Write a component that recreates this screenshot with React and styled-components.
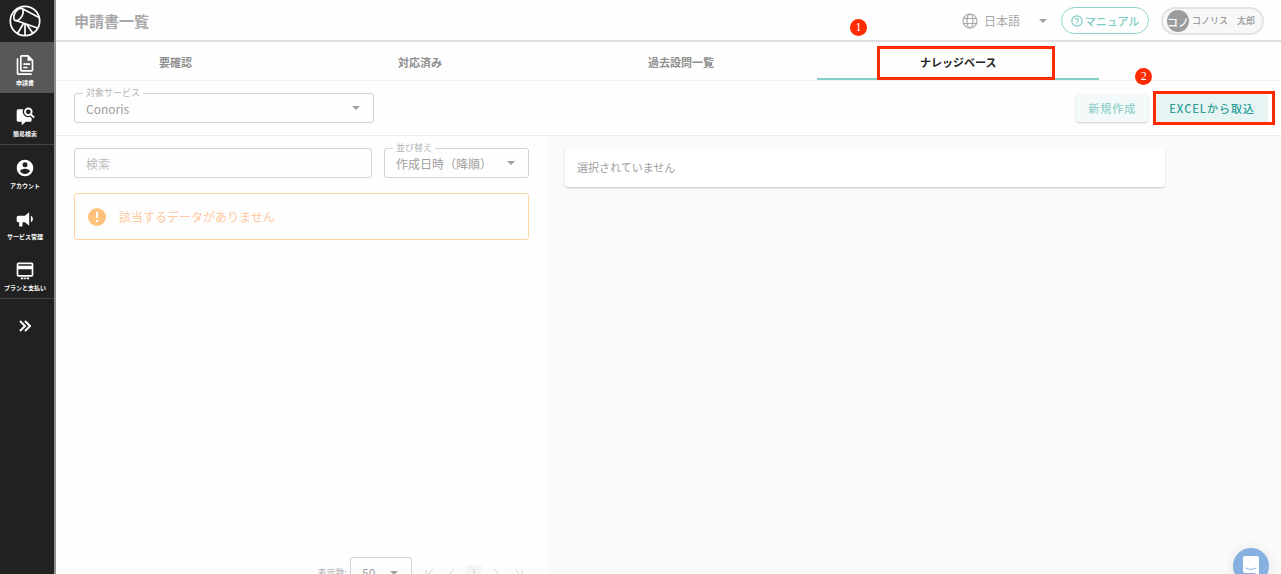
import styled, { createGlobalStyle } from "styled-components";

const GlobalStyle = createGlobalStyle`
  * {
    box-sizing: border-box;
  }
  body {
    margin: 0;
    background-color: #fefefe;
    color: #a0a0a0;
  }
  body, button, input, select {
    font-family: "Noto Sans CJK JP", "Noto Sans", sans-serif;
  }
`;

const menus = [
  { label: "申請書", icon: "files", active: true },
  { label: "簡易検索", icon: "search", divider: true },
  { label: "アカウント", icon: "account" },
  { label: "サービス管理", icon: "bullhorn" },
  { label: "プランと支払い", icon: "card", divider: true },
];

const tabs = ["要確認", "対応済み", "過去設問一覧"];

const paths = {
  files:
    "M16 0H8C6.9 0 6 .9 6 2V18C6 19.1 6.9 20 8 20H20C21.1 20 22 19.1 22 18V6L16 0M20 18H8V2H15V7H20V18M4 4V22H20V24H4C2.9 24 2 23.1 2 22V4H4M10 10V12H18V10H10M10 14V16H15V14H10Z",
  account:
    "M12,19.2C9.5,19.2 7.29,17.92 6,16C6.03,14 10,12.9 12,12.9C14,12.9 17.97,14 18,16C16.71,17.92 14.5,19.2 12,19.2M12,5A3,3 0 0,1 15,8A3,3 0 0,1 12,11A3,3 0 0,1 9,8A3,3 0 0,1 12,5M12,2A10,10 0 0,0 2,12A10,10 0 0,0 12,22A10,10 0 0,0 22,12C22,6.47 17.5,2 12,2Z",
  bullhorn:
    "M12,8H4A2,2 0 0,0 2,10V14A2,2 0 0,0 4,16H5V20A1,1 0 0,0 6,21H8A1,1 0 0,0 9,20V16H12L17,20V4L12,8M21.5,12C21.5,13.71 20.54,15.26 19,16V8C20.53,8.75 21.5,10.3 21.5,12Z",
  card: "M4 3H20A2 2 0 0 1 22 5V18A2 2 0 0 1 20 20H4A2 2 0 0 1 2 18V5A2 2 0 0 1 4 3M4 5V7H20V5H4M4 11V18H20V11H4M7 21H10V23H7V21M11 21H13V23H11V21M14 21H17V23H14V21Z",
};

function MenuIcon({ name }) {
  if (name === "search") {
    return (
      <svg width="20" height="20" viewBox="0 0 24 24" fill="currentColor">
        <path d="M4 4H10A6.500 6.500 0 0 0 18 13L20 15V17A2 2 0 0 1 18 19H13L8 23V19H4A2 2 0 0 1 2 17V6A2 2 0 0 1 4 4Z" />
        <circle cx="16" cy="7" r="4" fill="none" stroke="currentColor" strokeWidth="2.200" />
        <path d="M19 10L23 14" stroke="currentColor" strokeWidth="2.400" />
      </svg>
    );
  }
  return (
    <svg width="20" height="20" viewBox="0 0 24 24" fill="currentColor">
      <path d={paths[name]} />
    </svg>
  );
}

function Logo() {
  return (
    <svg width="32" height="32" viewBox="0 0 32 32" fill="none" stroke="#fff" strokeWidth="1.7">
      <circle cx="16" cy="16" r="14.7" />
      <ellipse cx="9.5" cy="9.5" rx="3.8" ry="6.8" transform="rotate(30 9.5 9.5)" />
      <path d="M13 3.500L30 12.500M7 15.500L28.500 23M16 19V30M14.500 18.500L8.500 28.500M17.500 19L24 28.500" />
    </svg>
  );
}

function Globe() {
  return (
    <svg width="16" height="16" viewBox="0 0 16 16" fill="none" stroke="#a8a8a8" strokeWidth="1.2">
      <circle cx="8" cy="8" r="7" />
      <ellipse cx="8" cy="8" rx="3" ry="7" />
      <path d="M1.5 5.5H14.5M1.5 10.5H14.5" />
    </svg>
  );
}

function Caret() {
  return (
    <CaretIcon width="8" height="4" viewBox="0 0 8 4" fill="#a0a0a0">
      <path d="M0 0H8L4 4Z" />
    </CaretIcon>
  );
}

function SelectField({ id, label, value, className }) {
  return (
    <Field className={className}>
      <FieldLabel htmlFor={id}>{label}</FieldLabel>
      <Select id={id} defaultValue={value}>
        <option>{value}</option>
      </Select>
      <Caret />
    </Field>
  );
}

function PageIcon({ d }) {
  return (
    <svg width="10" height="10" viewBox="0 0 10 10" fill="none" stroke="currentColor">
      <path d={d} />
    </svg>
  );
}

function App() {
  return (
    <Layout>
      <GlobalStyle />
      <Sidebar>
        <LogoLink href="#" aria-label="Conoris">
          <Logo />
        </LogoLink>
        {menus.map((menu) => (
          <MenuLink key={menu.label} href="#" $active={menu.active} $divider={menu.divider}>
            <MenuIcon name={menu.icon} />
            {menu.label}
          </MenuLink>
        ))}
        <ExpandButton type="button" aria-label="メニューを開く">
          <svg width="12" height="12" viewBox="0 0 12 12" fill="none" stroke="#fff" strokeWidth="2">
            <path d="M1 1L6 6L1 11M6 1L11 6L6 11" />
          </svg>
        </ExpandButton>
      </Sidebar>
      <Main>
        <Header>
          <Title>申請書一覧</Title>
          <Language>
            <Globe />
            <LanguageSelect aria-label="言語" defaultValue="日本語">
              <option>日本語</option>
            </LanguageSelect>
            <Caret />
          </Language>
          <ManualLink href="#">
            <svg width="12" height="12" viewBox="0 0 12 12" fill="none" stroke="currentColor" strokeWidth="1.2">
              <circle cx="6" cy="6" r="5.200" />
              <path d="M4.500 5A1.500 1.500 0 1 1 6 6.500V7.300M6 8.200V9.300" />
            </svg>
            マニュアル
          </ManualLink>
          <UserButton type="button">
            <Avatar>コノ</Avatar>
            コノリス　太郎
          </UserButton>
        </Header>
        <Tabs role="tablist">
          {tabs.map((tab) => (
            <Tab key={tab} type="button" role="tab" aria-selected="false">
              {tab}
            </Tab>
          ))}
          <Tab type="button" role="tab" aria-selected="true" $active>
            ナレッジベース
            <TabMarker />
            <TabBadge>1</TabBadge>
          </Tab>
        </Tabs>
        <Toolbar>
          <ServiceField id="service" label="対象サービス" value="Conoris" />
          <Actions>
            <ActionButton type="button" disabled>
              新規作成
            </ActionButton>
            <ActionButton type="button">
              EXCELから取込
              <ButtonMarker />
              <ButtonBadge>2</ButtonBadge>
            </ActionButton>
          </Actions>
        </Toolbar>
        <Content>
          <ListPane>
            <Filters>
              <SearchInput type="search" placeholder="検索" aria-label="検索" />
              <SortField id="sort" label="並び替え" value="作成日時（降順）" />
            </Filters>
            <Alert role="status">
              <svg width="18" height="18" viewBox="0 0 18 18">
                <circle cx="9" cy="9" r="9" fill="#ffc27d" />
                <path d="M8 4H10V10H8ZM8 12H10V14H8Z" fill="#fff" />
              </svg>
              該当するデータがありません
            </Alert>
            <Pager>
              <label htmlFor="size">表示数:</label>
              <SizeField>
                <Select id="size" defaultValue="50">
                  <option>50</option>
                </Select>
                <Caret />
              </SizeField>
              <Pages>
                <PageButton type="button" aria-label="最初" disabled>
                  <PageIcon d="M1 1V9M8 1L4 5L8 9" />
                </PageButton>
                <PageButton type="button" aria-label="前へ" disabled>
                  <PageIcon d="M7 1L3 5L7 9" />
                </PageButton>
                <PageButton type="button" $current>
                  1
                </PageButton>
                <PageButton type="button" aria-label="次へ" disabled>
                  <PageIcon d="M3 1L7 5L3 9" />
                </PageButton>
                <PageButton type="button" aria-label="最後" disabled>
                  <PageIcon d="M2 1L6 5L2 9M9 1V9" />
                </PageButton>
              </Pages>
            </Pager>
          </ListPane>
          <DetailPane>
            <Card>選択されていません</Card>
          </DetailPane>
        </Content>
      </Main>
      <ChatButton type="button" aria-label="チャット">
        <svg width="16" height="20" viewBox="0 0 16 20" fill="none">
          <path d="M2 0H14Q16 0 16 2V20L12 17H2Q0 17 0 15V2Q0 0 2 0Z" fill="#fff" />
          <path d="M3 12Q8 15 13 12" stroke="#86b0e0" strokeLinecap="round" />
        </svg>
      </ChatButton>
    </Layout>
  );
}

const Layout = styled.div`
  display: flex;
  height: 100vh;
  overflow: hidden;
`;

const Sidebar = styled.nav`
  display: flex;
  flex-direction: column;
  flex: none;
  width: 56px;
  border-right: 2px solid #8f8f8f;
  background-color: #212121;
`;
const LogoLink = styled.a`
  display: flex;
  align-items: center;
  justify-content: center;
  height: 42px;
  padding-right: 4px;
`;
const MenuLink = styled.a`
  display: flex;
  flex-direction: column;
  align-items: center;
  gap: 3px;
  height: ${(props) => (props.$divider ? 52 : 51)}px;
  padding: 13px 4px 0 0;
  border-bottom: ${(props) => (props.$divider ? "1px solid #424242" : "none")};
  background-color: ${(props) => (props.$active ? "#585858" : "transparent")};
  color: #fff;
  font-size: 6px;
  font-weight: 700;
  line-height: 10px;
  text-decoration: none;
  white-space: nowrap;
`;
const ExpandButton = styled.button`
  display: flex;
  align-items: center;
  justify-content: center;
  height: 54px;
  padding: 0 4px 0 0;
  border: 0;
  background: none;
`;

const Main = styled.main`
  display: flex;
  flex: 1;
  flex-direction: column;
  min-width: 0;
`;
const Header = styled.header`
  display: flex;
  align-items: center;
  flex: none;
  height: 42px;
  padding: 1px 17px 0 18px;
  border-bottom: 2px solid #dedede;
`;
const Title = styled.h1`
  margin: 0 auto 0 0;
  color: #a8a8a8;
  font-size: 15px;
  font-weight: 700;
  line-height: 22px;
`;
const CaretIcon = styled.svg`
  position: absolute;
  top: calc(50% - 2px);
  right: 14px;
  pointer-events: none;
`;
const Language = styled.div`
  position: relative;
  display: flex;
  align-items: center;
  gap: 6px;
  width: 99px;
`;
const LanguageSelect = styled.select`
  flex: 1;
  padding: 0;
  border: 0;
  appearance: none;
  background: none;
  color: #a8a8a8;
  font-size: 12px;
`;
const ManualLink = styled.a`
  display: flex;
  align-items: center;
  justify-content: center;
  gap: 2px;
  width: 88px;
  height: 27px;
  border: 1px solid #8fd3ce;
  border-radius: 14px;
  color: #7ccdc7;
  font-size: 11px;
  font-weight: 500;
  text-decoration: none;
`;
const UserButton = styled.button`
  display: flex;
  align-items: center;
  gap: 3px;
  height: 28px;
  margin-left: 12px;
  padding: 0 7px 0 4px;
  border: 2px solid #e4e4e4;
  border-radius: 14px;
  background-color: #f8f8f8;
  color: #9a9a9a;
  font-size: 9px;
  font-weight: 500;
  white-space: nowrap;
`;
const Avatar = styled.span`
  width: 22px;
  height: 22px;
  border-radius: 50%;
  background-color: #9c9c9c;
  color: #fff;
  font-size: 11px;
  line-height: 24px;
  overflow: hidden;
`;

const Tabs = styled.div`
  display: flex;
  flex: none;
  height: 39px;
  border-bottom: 1px solid #f2f2f2;
`;
const Tab = styled.button`
  position: relative;
  padding: 4px 103px 0;
  border: 0;
  border-bottom: 2px solid ${(props) => (props.$active ? "#86cfca" : "transparent")};
  background: none;
  color: ${(props) => (props.$active ? "#222" : "#8f8f8f")};
  font-size: 11px;
  font-weight: 700;
  white-space: nowrap;
`;
const Marker = styled.span`
  position: absolute;
  border: 3px solid #ff2a00;
  pointer-events: none;
`;
const TabMarker = styled(Marker)`
  inset: 4px 44px -2px 60px;
`;
const Badge = styled.span`
  position: absolute;
  width: 17px;
  height: 17px;
  border-radius: 50%;
  background-color: #ff2a00;
  color: #fff;
  font-family: "Liberation Serif", serif;
  font-size: 12px;
  font-weight: 400;
  letter-spacing: 0;
  line-height: 17px;
  text-align: center;
`;
const TabBadge = styled(Badge)`
  top: -23px;
  left: 33px;
`;

const Toolbar = styled.div`
  display: flex;
  align-items: center;
  justify-content: space-between;
  flex: none;
  height: 55px;
  padding: 0 14px 0 18px;
  border-bottom: 1px solid #ececec;
`;
const Field = styled.div`
  position: relative;
  height: 30px;
`;
const ServiceField = styled(SelectField)`
  width: 300px;
`;
const SortField = styled(SelectField)`
  width: 145px;
`;
const FieldLabel = styled.label`
  position: absolute;
  top: -6px;
  left: 9px;
  padding: 0 3px;
  background-color: #fefefe;
  color: #b4b4b4;
  font-size: 9px;
  line-height: 12px;
`;
const Select = styled.select`
  width: 100%;
  height: 100%;
  padding: 0 11px;
  border: 1px solid #d2d2d2;
  border-radius: 3px;
  appearance: none;
  background: none;
  color: #a0a0a0;
  font-size: 12px;
`;
const Actions = styled.div`
  display: flex;
  gap: 9px;
`;
const ActionButton = styled.button`
  position: relative;
  height: 28px;
  padding: 0 12px;
  border: 0;
  border-radius: 3px;
  background-color: #e6f5f4;
  box-shadow: 0 1px 2px rgba(0, 0, 0, 0.2);
  color: #2a9d95;
  font-size: 11px;
  font-weight: 500;
  letter-spacing: 1px;
  white-space: nowrap;

  &:disabled {
    background-color: #f4fafa;
    color: #94d0cc;
  }
`;
const ButtonMarker = styled(Marker)`
  inset: -3px -8px -3px -4px;
`;
const ButtonBadge = styled(Badge)`
  top: -26px;
  left: -22px;
`;

const Content = styled.div`
  display: flex;
  flex: 1;
  min-height: 0;
`;
const ListPane = styled.section`
  display: flex;
  flex-direction: column;
  flex: none;
  width: calc(40% + 1px);
  height: calc(100% + 14px);
  padding: 12px 18px 0;
`;
const Filters = styled.div`
  display: flex;
  gap: 12px;
`;
const SearchInput = styled.input`
  flex: 1;
  min-width: 0;
  height: 30px;
  padding: 0 11px;
  border: 1px solid #d2d2d2;
  border-radius: 3px;
  background: none;
  font-size: 12px;

  &::placeholder {
    color: #bdbdbd;
  }
`;
const Alert = styled.div`
  display: flex;
  align-items: center;
  gap: 13px;
  height: 47px;
  margin-top: 15px;
  padding: 0 13px;
  border: 1px solid #ffd6a3;
  border-radius: 3px;
  color: #ffc9a0;
  font-size: 12px;
`;
const Pager = styled.div`
  display: flex;
  align-items: center;
  justify-content: flex-end;
  margin-top: auto;
  padding-right: 3px;
  color: #b0b0b0;
  font-size: 9px;
`;
const SizeField = styled.div`
  position: relative;
  width: 62px;
  height: 31px;
  margin-left: 3px;
`;
const Pages = styled.div`
  display: flex;
  gap: 6px;
  margin-left: 10px;
`;
const PageButton = styled.button`
  display: flex;
  align-items: center;
  justify-content: center;
  width: 16px;
  height: 16px;
  padding: 0;
  border: 0;
  border-radius: 3px;
  background-color: ${(props) => (props.$current ? "#f5f5f5" : "transparent")};
  color: #d2d2d2;
  font-size: 9px;
`;

const DetailPane = styled.section`
  flex: 1;
  padding: 12px 18px;
  background-color: #fafafa;
`;
const Card = styled.div`
  max-width: 600px;
  padding: 10px 12px;
  border-radius: 3px;
  background-color: #fff;
  box-shadow: 0 1px 2px rgba(0, 0, 0, 0.2);
  font-size: 11px;
  line-height: 19px;
`;

const ChatButton = styled.button`
  position: fixed;
  right: 12px;
  bottom: -10px;
  display: flex;
  align-items: center;
  justify-content: center;
  width: 36px;
  height: 36px;
  border: 0;
  border-radius: 50%;
  background-color: #86b0e0;
  box-shadow: 0 1px 12px rgba(0, 0, 0, 0.1);
`;

export default App;
